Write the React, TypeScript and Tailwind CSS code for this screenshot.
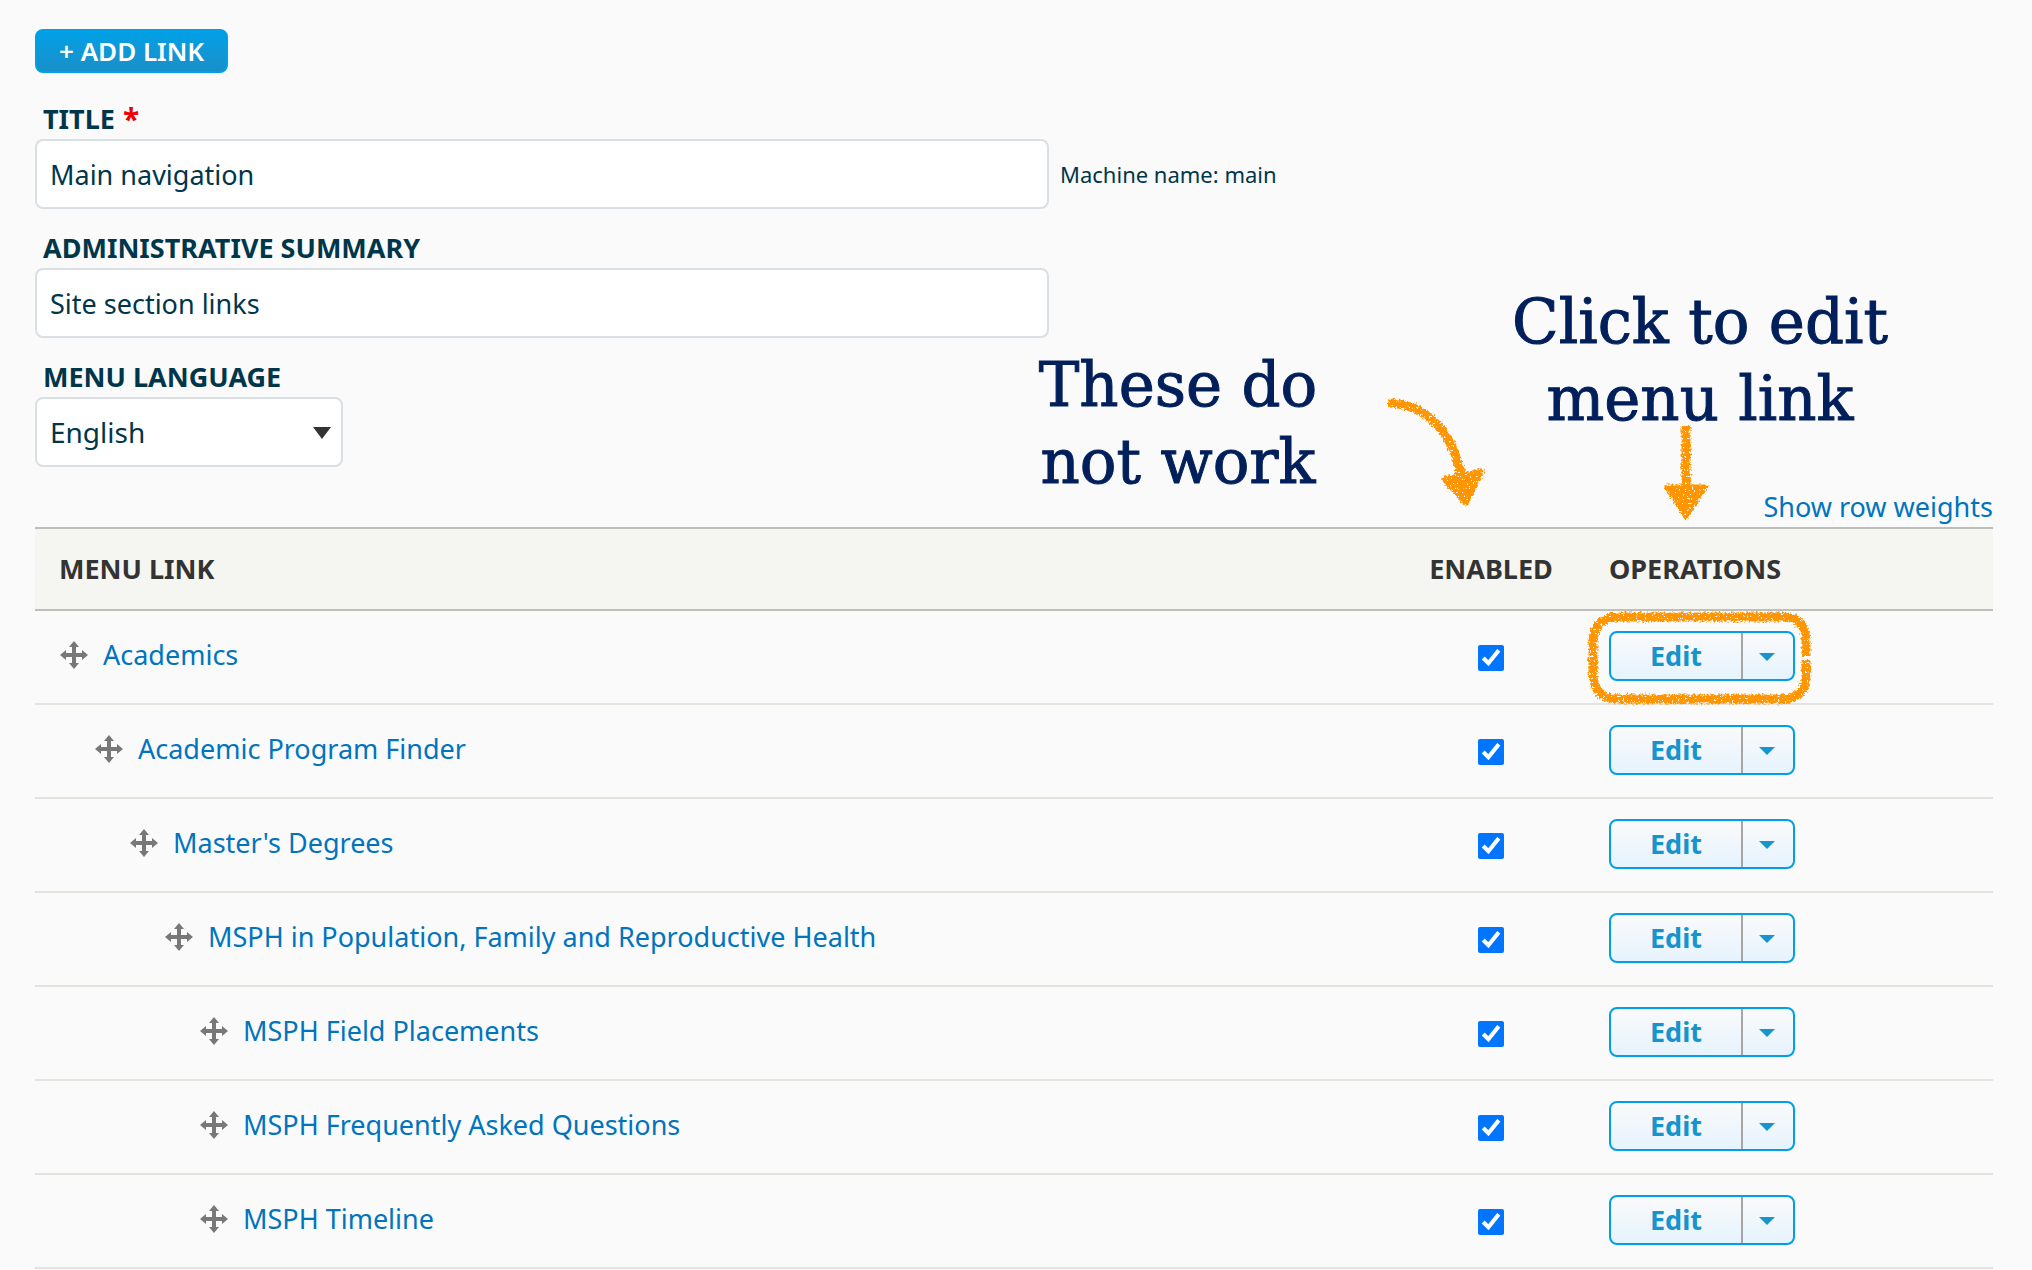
type MenuLink = { title: string; depth: number };

const links: MenuLink[] = [
  { title: "Academics", depth: 0 },
  { title: "Academic Program Finder", depth: 1 },
  { title: "Master's Degrees", depth: 2 },
  { title: "MSPH in Population, Family and Reproductive Health", depth: 3 },
  { title: "MSPH Field Placements", depth: 4 },
  { title: "MSPH Frequently Asked Questions", depth: 4 },
  { title: "MSPH Timeline", depth: 4 },
];

const labelClass = "flex w-fit gap-2 pl-2 pb-0.5 leading-9 font-bold uppercase text-[#00364a]";
const fieldClass = "h-[70px] rounded-lg border-2 border-[#d9dfe3] bg-white text-[#00364a]";
const noteClass =
  "absolute text-center font-['DejaVu_Serif',serif] text-[61px] leading-[77px] text-[#001f5b] [-webkit-text-stroke:1px_#001f5b]";

function DragHandle() {
  return (
    <svg width="28" height="28" viewBox="0 0 28 28" className="shrink-0" aria-hidden="true">
      <path
        fill="#787878"
        d="M14 0l5 6h-3v6h6V9l6 5-6 5v-3h-6v6h3l-5 6-5-6h3v-6H6v3l-6-5 6-5v3h6V6H9z"
      />
    </svg>
  );
}

// Rough edges and speckles for the hand drawn marks
function CrayonFilter() {
  return (
    <svg width="0" height="0" className="absolute" aria-hidden="true">
      <filter
        id="crayon"
        filterUnits="userSpaceOnUse"
        x="-10"
        y="-10"
        width="300"
        height="200"
        colorInterpolationFilters="sRGB"
      >
        <feTurbulence type="fractalNoise" baseFrequency="0.45" numOctaves="2" seed="4" result="noise" />
        <feDisplacementMap
          in="SourceGraphic"
          in2="noise"
          scale="6"
          xChannelSelector="R"
          yChannelSelector="G"
          result="rough"
        />
        <feColorMatrix
          in="noise"
          type="matrix"
          values="0 0 0 0 0  0 0 0 0 0  0 0 0 0 0  0 0 -12 0 8.8"
          result="grain"
        />
        <feComposite in="rough" in2="grain" operator="in" />
      </filter>
    </svg>
  );
}

function CurvedArrow() {
  return (
    <svg width="110" height="120" viewBox="0 0 110 120" className="absolute top-[392px] right-[542px]" aria-hidden="true">
      <g filter="url(#crayon)">
        <path d="M8 11C48 12 74 42 82 87" fill="none" stroke="#ff9500" strokeWidth="9" />
        <path
          d="M64 87l38-8-16 33z"
          fill="#ff9500"
          stroke="#ff9500"
          strokeWidth="5"
          strokeLinejoin="round"
        />
      </g>
    </svg>
  );
}

function DownArrow() {
  return (
    <svg width="60" height="110" viewBox="0 0 60 110" className="absolute top-[416px] right-[316px]" aria-hidden="true">
      <g filter="url(#crayon)">
        <path d="M30 10V72" fill="none" stroke="#ff9500" strokeWidth="9" />
        <path
          d="M11 71h38L30 101z"
          fill="#ff9500"
          stroke="#ff9500"
          strokeWidth="5"
          strokeLinejoin="round"
        />
      </g>
    </svg>
  );
}

function Outline() {
  return (
    <svg
      width="230"
      height="98"
      viewBox="0 0 230 98"
      className="pointer-events-none absolute -top-[22px] -left-6"
      aria-hidden="true"
    >
      <path
        d="M221 47V32Q221 8 196 8H34Q8 8 8 34V64Q8 90 34 90H196Q221 90 221 66V51"
        fill="none"
        stroke="#ff9500"
        strokeWidth="9"
        filter="url(#crayon)"
      />
    </svg>
  );
}

function DropButton({ title }: { title: string }) {
  return (
    <div className="flex h-[50px] w-[186px] overflow-hidden rounded-lg border-2 border-[#00a0e3] bg-linear-to-b from-[#fafafb] to-[#e6f3fd] text-[#1594cd]">
      <button type="button" className="flex-1 font-bold">
        Edit
      </button>
      <button
        type="button"
        aria-label={`More operations for ${title}`}
        className="flex w-[52px] items-center justify-center border-l-2 border-[#a6a6a6] pr-0.5 pt-0.5"
      >
        <svg width="16" height="8" viewBox="0 0 16 8" aria-hidden="true">
          <path d="M0 0h16L8 8z" fill="currentColor" />
        </svg>
      </button>
    </div>
  );
}

function MenuRow({ link, outlined }: { link: MenuLink; outlined: boolean }) {
  return (
    <tr>
      <td className="h-[94px] border-b-2 border-[#e4e4df] px-[25px] pb-1">
        <div className="flex items-center" style={{ paddingLeft: link.depth * 35 }}>
          <DragHandle />
          <a href="#" className="ml-[15px] text-[#0074bd]">
            {link.title}
          </a>
        </div>
      </td>
      <td className="border-b-2 border-[#e4e4df] pt-0.5 text-center">
        <input
          type="checkbox"
          defaultChecked
          aria-label={`Enable ${link.title}`}
          className="mx-auto block size-[26px]"
        />
      </td>
      <td className="border-b-2 border-[#e4e4df] px-6 pb-0.5">
        <div className="relative">
          <DropButton title={link.title} />
          {outlined && <Outline />}
        </div>
      </td>
    </tr>
  );
}

export default function App() {
  return (
    <div className="relative min-h-screen bg-[#fafafb] pt-[29px] pr-[39px] pl-[35px] font-['Noto_Sans',sans-serif] text-[27px] leading-9">
      <CrayonFilter />

      <button
        type="button"
        className="block h-11 rounded-lg border-2 border-[#00a0e6] bg-linear-to-b from-[#00a0e6] to-[#1790c9] px-[22px] text-[26px] font-semibold text-white"
      >
        + ADD LINK
      </button>

      <form className="mt-7 flex flex-col gap-[21px]">
        <div>
          <label htmlFor="title" className={labelClass}>
            Title <span className="text-[30px] text-[#ee0000]">*</span>
          </label>
          <div className="flex items-center">
            <input id="title" type="text" defaultValue="Main navigation" className={`${fieldClass} w-[1014px] px-[13px]`} />
            <span className="ml-[11px] text-[22px] text-[#00364a]">Machine name: main</span>
          </div>
        </div>
        <div>
          <label htmlFor="summary" className={labelClass}>
            Administrative summary
          </label>
          <input
            id="summary"
            type="text"
            defaultValue="Site section links"
            className={`${fieldClass} block w-[1014px] px-[13px]`}
          />
        </div>
        <div>
          <label htmlFor="language" className={labelClass}>
            Menu language
          </label>
          <div className="relative w-[308px]">
            <select id="language" className={`${fieldClass} block w-full appearance-none px-[13px] text-[28px]`}>
              <option>English</option>
            </select>
            <svg
              width="18"
              height="12"
              viewBox="0 0 18 12"
              className="pointer-events-none absolute top-[30px] right-3"
              aria-hidden="true"
            >
              <path d="M0 0h18L9 12z" fill="#333" />
            </svg>
          </div>
        </div>
      </form>

      <div className="mt-[22px] mb-0.5 flex justify-end">
        <button type="button" className="text-[#0074bd]">
          Show row weights
        </button>
      </div>

      <table className="w-full table-fixed border-separate border-spacing-0">
        <thead className="bg-[#f5f5f2] text-left text-[#333] uppercase">
          <tr>
            <th className="h-[84px] border-y-2 border-[#bfbfba] px-6 font-bold">Menu link</th>
            <th className="w-[188px] border-y-2 border-[#bfbfba] text-center font-bold">Enabled</th>
            <th className="w-[408px] border-y-2 border-[#bfbfba] px-6 font-bold">Operations</th>
          </tr>
        </thead>
        <tbody>
          {links.map((link, i) => (
            <MenuRow key={link.title} link={link} outlined={i === 0} />
          ))}
        </tbody>
      </table>

      <p className={`${noteClass} top-[346px] right-[704px] w-[300px]`}>These do not work</p>
      <p className={`${noteClass} top-[283px] right-[132px] w-[400px]`}>Click to edit menu link</p>
      <CurvedArrow />
      <DownArrow />
    </div>
  );
}
